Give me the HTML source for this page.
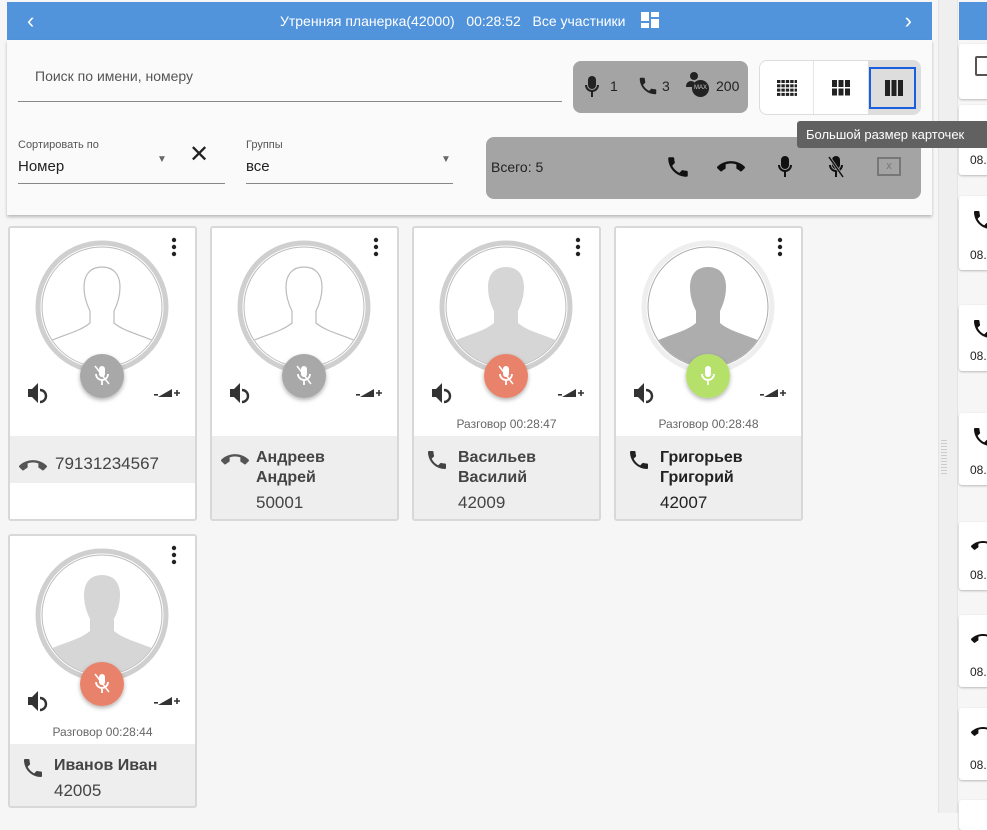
<!DOCTYPE html>
<html><head><meta charset="utf-8"><style>
*{box-sizing:border-box;margin:0;padding:0}
body{width:987px;height:813px;background:#f6f6f6;font-family:"Liberation Sans","Noto Sans CJK SC",sans-serif;position:relative;overflow:hidden;color:#333}
.a{position:absolute}
.top{left:7px;top:2px;width:925px;height:38px;background:#5294dc;color:#fff;font-size:14px;text-align:center;line-height:38px}
.panel{left:7px;top:40px;width:925px;height:175px;background:#fafafa;box-shadow:0 2px 3px rgba(0,0,0,.25)}
.card{width:189px;height:295px;background:#fff;border:2px solid #d8d8d8;border-radius:3px;overflow:hidden}
.gs{left:0;right:0;top:208px;bottom:0;background:#eee}
.nm{font-weight:bold;font-size:16px;color:#444;line-height:20px}
.num{font-size:17px;color:#444}
.talk{left:0;right:0;top:189px;text-align:center;font-size:12px;color:#666}
.rc{left:959px;width:40px;background:#fff;border-radius:3px;box-shadow:0 1px 2px rgba(0,0,0,.25)}
.rc span{position:absolute;left:11px;bottom:8px;font-size:12px;color:#222}
.ph{position:absolute}
</style></head><body>
<svg width="0" height="0" style="position:absolute"><defs>
<path id="phone" d="M6.62 10.79c1.44 2.83 3.76 5.14 6.590 6.59l2.2-2.2c.27-.27.67-.36 1.02-.24 1.12.37 2.33.57 3.57.57.55 0 1 .45 1 1V20c0 .55-.45 1-1 1-9.39 0-17-7.610-17-17 0-.55.45-1 1-1h3.5c.55 0 1 .45 1 1 0 1.25.2 2.45.57 3.57.11.35.03.74-.24 1.02l-2.2 2.2z"/>
<path id="hang" d="M12 9c-1.6 0-3.15.25-4.6.72v3.1c0 .39-.23.74-.56.9-.98.49-1.87 1.12-2.66 1.85-.18.18-.43.28-.7.28-.28 0-.53-.11-.71-.29L.29 13.08c-.18-.17-.29-.42-.29-.7 0-.28.11-.53.29-.71C3.34 8.78 7.46 7 12 7s8.66 1.78 11.71 4.670c.18.18.29.43.29.71 0 .28-.11.53-.29.71l-2.48 2.48c-.18.18-.43.29-.71.29-.27 0-.52-.11-.7-.28-.79-.74-1.69-1.36-2.67-1.85-.33-.16-.56-.5-.56-.9v-3.1C15.15 9.25 13.6 9 12 9z"/>
</defs></svg>
<div class="a" style="left:938px;top:0;width:20px;height:813px;background:#efefef;border-left:1px solid #e4e4e4;border-right:1px solid #e4e4e4"></div>
<div class="a" style="left:941px;top:440px;width:6px;height:34px;background:repeating-linear-gradient(#ccc 0 1px,transparent 1px 3px)"></div>
<div class="a" style="left:959px;top:2px;width:30px;height:38px;background:#5294dc"></div>
<div class="a rc" style="top:44px;height:55px"><div class="a" style="left:16px;top:12px;width:14px;height:20px;border:2px solid #555;border-radius:2px"></div></div>
<div class="a rc" style="top:105px;height:70px"><span>08.</span></div>
<div class="a rc" style="top:196px;height:74px"><span>08.</span><svg class="ph" style="left:12px;top:12px" width="24" height="24" viewBox="0 0 24 24"><use href="#phone" fill="#111"/></svg></div>
<div class="a rc" style="top:305px;height:66px"><span>08.</span><svg class="ph" style="left:12px;top:12px" width="24" height="24" viewBox="0 0 24 24"><use href="#phone" fill="#111"/></svg></div>
<div class="a rc" style="top:413px;height:72px"><span>08.</span><svg class="ph" style="left:12px;top:12px" width="24" height="24" viewBox="0 0 24 24"><use href="#phone" fill="#111"/></svg></div>
<div class="a rc" style="top:522px;height:68px"><span>08.</span><svg class="ph" style="left:12px;top:12px" width="24" height="24" viewBox="0 0 24 24"><use href="#hang" fill="#111"/></svg></div>
<div class="a rc" style="top:615px;height:72px"><span>08.</span><svg class="ph" style="left:12px;top:12px" width="24" height="24" viewBox="0 0 24 24"><use href="#hang" fill="#111"/></svg></div>
<div class="a rc" style="top:708px;height:72px"><span>08.</span><svg class="ph" style="left:12px;top:12px" width="24" height="24" viewBox="0 0 24 24"><use href="#hang" fill="#111"/></svg></div>
<div class="a rc" style="top:800px;height:30px"></div>

<div class="a top"><span class="a" style="left:20px;font-size:22px">‹</span>Утренняя планерка(42000)&nbsp;&nbsp; 00:28:52&nbsp;&nbsp; Все участники &nbsp;&nbsp;&nbsp;<svg width="18" height="16" viewBox="0 0 18 16" style="vertical-align:-2px"><rect x="0" y="0" width="8" height="9" fill="#fff"/><rect x="10" y="0" width="8" height="5" fill="#fff"/><rect x="0" y="11" width="8" height="5" fill="#fff"/><rect x="10" y="7" width="8" height="9" fill="#fff"/></svg><span class="a" style="right:20px;font-size:22px">›</span></div>
<div class="a panel">
 <div class="a" style="left:28px;top:28px;font-size:14px;color:#555">Поиск по имени, номеру</div>
 <div class="a" style="left:11px;top:61px;width:544px;height:1px;background:#888"></div>
 <div class="a" style="left:566px;top:21px;width:175px;height:52px;background:#a4a4a4;border-radius:8px;font-size:14px;color:#222">
  <svg class="a" style="left:12px;top:15px" width="14" height="22" viewBox="0 0 14 22"><rect x="3" y="0" width="8" height="13" rx="4" fill="#222"/><path d="M1 9a6 6 0 0 0 12 0" stroke="#222" stroke-width="2" fill="none"/><rect x="6" y="15" width="2" height="6" fill="#222"/></svg>
  <span class="a" style="left:37px;top:17px">1</span>
  <svg class="a" style="left:64px;top:14px" width="22" height="22" viewBox="0 0 24 24"><use href="#phone" fill="#222"/></svg><span class="a" style="left:89px;top:17px">3</span>
  <div class="a" style="left:117px;top:11px;width:8px;height:8px;border-radius:50%;background:#222"></div>
  <div class="a" style="left:113px;top:20px;width:10px;height:6px;border-radius:5px 5px 0 0;background:#222"></div>
  <div class="a" style="left:119px;top:19px;width:17px;height:17px;border-radius:50%;background:#222;color:#ccc;font-size:6px;line-height:17px;text-align:center">MAX</div>
  <span class="a" style="left:143px;top:17px">200</span>
 </div>
 <div class="a" style="left:752px;top:20px;width:162px;height:55px;background:#fff;border:1px solid #ddd;border-radius:8px;overflow:hidden">
  <div class="a" style="left:53px;top:0;width:1px;height:55px;background:#e5e5e5"></div>
  <div class="a" style="left:108px;top:0;width:54px;height:55px;background:#ddd"></div>
  <div class="a" style="left:109px;top:6px;width:47px;height:42px;border:2px solid #1a5ee0"></div>
  <svg class="a" style="left:17px;top:19px" width="20" height="16"><g fill="#222"><rect x="0" y="0" width="20" height="3"/><rect x="0" y="4.3" width="20" height="3"/><rect x="0" y="8.6" width="20" height="3"/><rect x="0" y="12.9" width="20" height="3"/></g><g fill="#fff"><rect x="3.4" y="0" width="1" height="16"/><rect x="7.8" y="0" width="1" height="16"/><rect x="12.2" y="0" width="1" height="16"/><rect x="16.6" y="0" width="1" height="16"/></g></svg>
  <svg class="a" style="left:72px;top:19px" width="18" height="16"><g fill="#222"><rect x="0" y="0" width="5" height="7"/><rect x="6.5" y="0" width="5" height="7"/><rect x="13" y="0" width="5" height="7"/><rect x="0" y="8.5" width="5" height="7"/><rect x="6.5" y="8.5" width="5" height="7"/><rect x="13" y="8.5" width="5" height="7"/></g></svg>
  <svg class="a" style="left:125px;top:19px" width="18" height="16"><g fill="#222"><rect x="0" y="0" width="5" height="16"/><rect x="6.5" y="0" width="5" height="16"/><rect x="13" y="0" width="5" height="16"/></g></svg>
 </div>
 <div class="a" style="left:11px;top:99px;font-size:11px;color:#555">Сортировать по</div>
 <div class="a" style="left:11px;top:118px;font-size:15px;color:#222">Номер</div>
 <div class="a" style="left:150px;top:114px;font-size:10px;color:#666">▼</div>
 <div class="a" style="left:182px;top:100px;font-size:24px;color:#222">✕</div>
 <div class="a" style="left:11px;top:143px;width:207px;height:1px;background:#888"></div>
 <div class="a" style="left:239px;top:99px;font-size:11px;color:#555">Группы</div>
 <div class="a" style="left:239px;top:118px;font-size:15px;color:#222">все</div>
 <div class="a" style="left:434px;top:114px;font-size:10px;color:#666">▼</div>
 <div class="a" style="left:239px;top:143px;width:207px;height:1px;background:#888"></div>
 <div class="a" style="left:479px;top:97px;width:435px;height:62px;background:#a4a4a4;border-radius:8px">
  <div class="a" style="left:5px;top:22px;font-size:14px;color:#222">Всего: 5</div>
  <svg class="a" style="left:179px;top:17px" width="26" height="26" viewBox="0 0 24 24"><use href="#phone" fill="#111"/></svg>
  <svg class="a" style="left:231px;top:16px" width="28" height="28" viewBox="0 0 24 24"><use href="#hang" fill="#111"/></svg>
  <svg class="a" style="left:292px;top:18px" width="14" height="24" viewBox="0 0 14 22"><rect x="3" y="0" width="8" height="13" rx="4" fill="#111"/><path d="M1 9a6 6 0 0 0 12 0" stroke="#111" stroke-width="2" fill="none"/><rect x="6" y="15" width="2" height="6" fill="#111"/></svg>
  <svg class="a" style="left:342px;top:18px" width="16" height="24" viewBox="0 0 16 22"><rect x="4" y="0" width="8" height="13" rx="4" fill="#111"/><path d="M2 9a6 6 0 0 0 12 0" stroke="#111" stroke-width="2" fill="none"/><rect x="7" y="15" width="2" height="6" fill="#111"/><path d="M1 1L15 21" stroke="#a4a4a4" stroke-width="3"/><path d="M1 1L15 21" stroke="#111" stroke-width="1.5"/></svg>
  <div class="a" style="left:391px;top:20px;width:24px;height:19px;border:2px solid #777;color:#777;font-size:11px;text-align:center;line-height:15px">x</div>
 </div>
</div>
<div class="a" style="left:797px;top:121px;width:190px;height:27px;background:#616161;color:#fff;font-size:13px;line-height:27px;padding-left:9px;border-radius:3px 0 0 3px">Большой размер карточек</div>

<!-- cards -->
<div class="a card" style="left:8px;top:226px;height:295px">
 <div class="a gs" style="top:208px;bottom:36px"></div>
 <svg class="ph" style="left:9px;top:224px" width="28" height="28" viewBox="0 0 24 24"><use href="#hang" fill="#555"/></svg>
 <div class="a num" style="left:45px;top:226px">79131234567</div>
</div>
<div class="a card" style="left:210px;top:226px">
 <div class="a gs"></div>
 <svg class="ph" style="left:9px;top:218px" width="28" height="28" viewBox="0 0 24 24"><use href="#hang" fill="#555"/></svg>
 <div class="a nm" style="left:44px;top:220px">Андреев<br>Андрей</div><div class="a num" style="left:44px;top:265px">50001</div>
</div>
<div class="a card" style="left:412px;top:226px">
 <div class="a talk">Разговор 00:28:47</div>
 <div class="a gs"></div>
 <svg class="ph" style="left:11px;top:220px" width="24" height="24" viewBox="0 0 24 24"><use href="#phone" fill="#444"/></svg>
 <div class="a nm" style="left:44px;top:220px">Васильев<br>Василий</div><div class="a num" style="left:44px;top:265px">42009</div>
</div>
<div class="a card" style="left:614px;top:226px">
 <div class="a talk">Разговор 00:28:48</div>
 <div class="a gs"></div>
 <svg class="ph" style="left:11px;top:220px" width="24" height="24" viewBox="0 0 24 24"><use href="#phone" fill="#222"/></svg>
 <div class="a nm" style="left:44px;top:220px;color:#222">Григорьев<br>Григорий</div><div class="a num" style="left:44px;top:265px;color:#222">42007</div>
</div>
<div class="a card" style="left:8px;top:534px;height:274px">
 <div class="a talk">Разговор 00:28:44</div>
 <div class="a gs"></div>
 <svg class="ph" style="left:11px;top:220px" width="24" height="24" viewBox="0 0 24 24"><use href="#phone" fill="#444"/></svg>
 <div class="a nm" style="left:44px;top:220px">Иванов Иван</div><div class="a num" style="left:44px;top:245px">42005</div>
</div>

<!-- avatars -->
<svg class="a" style="left:0;top:0" width="987" height="813">
<defs>
<clipPath id="cc" clipPathUnits="userSpaceOnUse"><circle cx="0" cy="0" r="59.5"/></clipPath>
<path id="sil" d="M0 -40c-12 0-18 8-18 20 0 10 3 18 6 24l0 12c-12 10-30 12-48 22L-60 80H60L60 38c-18-10-36-12-48-22l0-12c3-6 6-14 6-24 0-12-6-20-18-20z"/>
<g id="dots"><circle r="2.2" cy="0"/><circle r="2.2" cy="7"/><circle r="2.2" cy="14"/></g>
<g id="spk"><path d="M-8 -4h4l6-6v20l-6-6h-4z" fill="#333"/><path d="M4 -3a6 6 0 0 1 0 12" stroke="#333" stroke-width="2.4" fill="none"/></g>
<g id="vol"><rect x="-12" y="0" width="4" height="1.6" fill="#333"/><path d="M-8 3L6 -5V3z" fill="#333"/><path d="M8 -1h6M11 -4v6" stroke="#333" stroke-width="1.6"/></g>
<g id="micx" fill="none" stroke="#fff" stroke-width="1.8"><rect x="-3" y="-9" width="6" height="11" rx="3" fill="#fff" stroke="none"/><path d="M-6 -1a6 6 0 0 0 12 0M0 5v5"/><path d="M-7 -9L7 9" stroke-width="1.5"/></g>
<filter id="sh" x="-50%" y="-50%" width="200%" height="200%"><feDropShadow dx="0" dy="2" stdDeviation="2" flood-opacity=".3"/></filter>
</defs>
<g>
 <circle cx="102" cy="307" r="64" fill="#fff" stroke="#cfcfcf" stroke-width="5"/><circle cx="102" cy="307" r="60" fill="none" stroke="#bbb" stroke-width="1"/>
 <g transform="translate(102,307)"><use href="#sil" clip-path="url(#cc)" fill="#fff" stroke="#bbb" stroke-width="1.2"/></g>
 <circle cx="102" cy="376" r="22" fill="#a8a8a8" filter="url(#sh)"/><g transform="translate(102,375)"><use href="#micx"/></g>
 <g transform="translate(174,240)" fill="#222"><use href="#dots"/></g><g transform="translate(36,393)"><use href="#spk"/></g><g transform="translate(166,394)"><use href="#vol"/></g>
</g>
<g>
 <circle cx="304" cy="307" r="64" fill="#fff" stroke="#cfcfcf" stroke-width="5"/><circle cx="304" cy="307" r="60" fill="none" stroke="#bbb" stroke-width="1"/>
 <g transform="translate(304,307)"><use href="#sil" clip-path="url(#cc)" fill="#fff" stroke="#bbb" stroke-width="1.2"/></g>
 <circle cx="304" cy="376" r="22" fill="#a8a8a8" filter="url(#sh)"/><g transform="translate(304,375)"><use href="#micx"/></g>
 <g transform="translate(376,240)" fill="#222"><use href="#dots"/></g><g transform="translate(238,393)"><use href="#spk"/></g><g transform="translate(368,394)"><use href="#vol"/></g>
</g>
<g>
 <circle cx="506" cy="307" r="64" fill="#fff" stroke="#cfcfcf" stroke-width="5"/><circle cx="506" cy="307" r="60" fill="none" stroke="#bbb" stroke-width="1"/>
 <g transform="translate(506,307)"><use href="#sil" clip-path="url(#cc)" fill="#d6d6d6"/></g>
 <circle cx="506" cy="376" r="22" fill="#e9826a" filter="url(#sh)"/><g transform="translate(506,375)"><use href="#micx"/></g>
 <g transform="translate(578,240)" fill="#222"><use href="#dots"/></g><g transform="translate(440,393)"><use href="#spk"/></g><g transform="translate(570,394)"><use href="#vol"/></g>
</g>
<g>
 <circle cx="708" cy="307" r="64" fill="#fff" stroke="#eeeeee" stroke-width="5"/><circle cx="708" cy="307" r="60" fill="none" stroke="#aaa" stroke-width="1"/>
 <g transform="translate(708,307)"><use href="#sil" clip-path="url(#cc)" fill="#adadad"/></g>
 <circle cx="708" cy="376" r="22" fill="#b5e16b" filter="url(#sh)"/><g transform="translate(708,375)" fill="none" stroke="#fff" stroke-width="1.8"><rect x="-3" y="-9" width="6" height="11" rx="3" fill="#fff" stroke="none"/><path d="M-6 -1a6 6 0 0 0 12 0M0 5v5"/></g>
 <g transform="translate(780,240)" fill="#222"><use href="#dots"/></g><g transform="translate(642,393)"><use href="#spk"/></g><g transform="translate(772,394)"><use href="#vol"/></g>
</g>
<g>
 <circle cx="102" cy="615" r="64" fill="#fff" stroke="#cfcfcf" stroke-width="5"/><circle cx="102" cy="615" r="60" fill="none" stroke="#bbb" stroke-width="1"/>
 <g transform="translate(102,615)"><use href="#sil" clip-path="url(#cc)" fill="#d6d6d6"/></g>
 <circle cx="102" cy="684" r="22" fill="#e9826a" filter="url(#sh)"/><g transform="translate(102,683)"><use href="#micx"/></g>
 <g transform="translate(174,548)" fill="#222"><use href="#dots"/></g><g transform="translate(36,701)"><use href="#spk"/></g><g transform="translate(166,702)"><use href="#vol"/></g>
</g>
</svg>
</body></html>
